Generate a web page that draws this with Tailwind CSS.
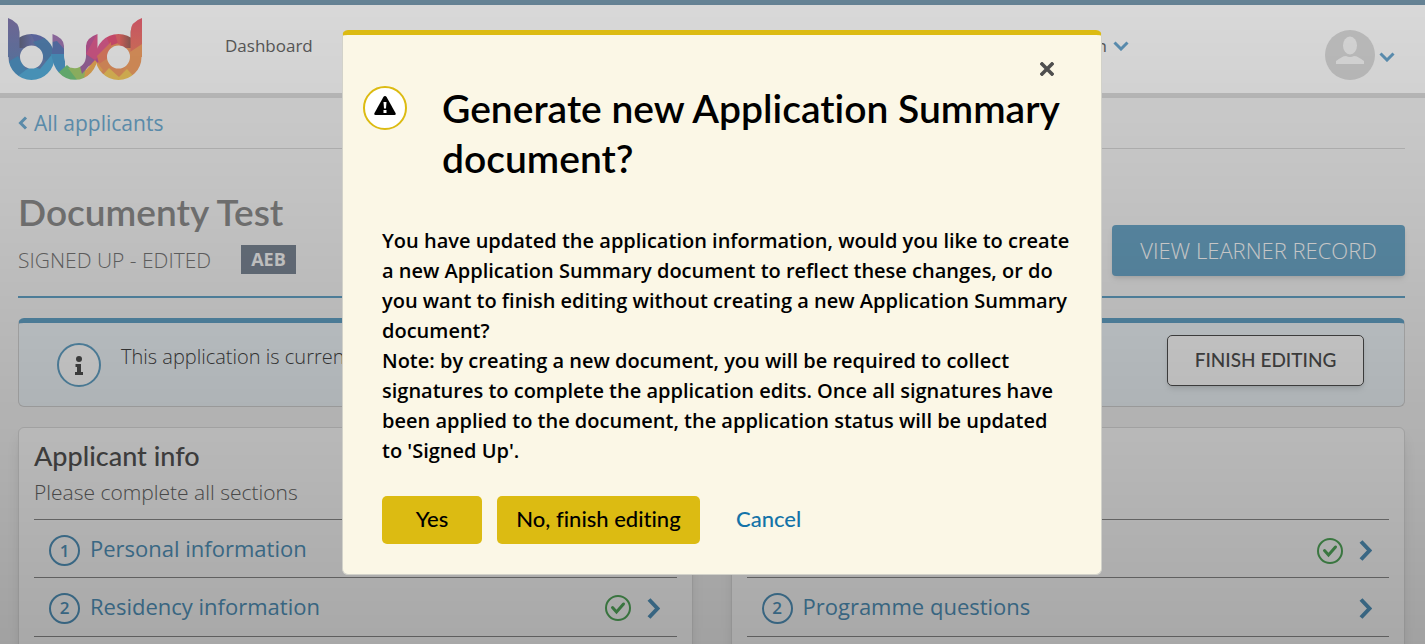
<!DOCTYPE html>
<html lang="en">
<head>
    <meta charset="UTF-8">
    <meta name="viewport" content="width=device-width, initial-scale=1.0">
    <title>Documenty Test</title>
    <script src="https://cdn.jsdelivr.net/npm/@tailwindcss/browser@4"></script>
</head>
<body class="h-screen overflow-hidden bg-[#f5f5f5] font-['Open_Sans',sans-serif] text-[#666] [font-variant-ligatures:none]">
    <svg class="hidden">
        <symbol id="check" viewBox="0 0 26 26" fill="none" stroke="currentColor">
            <circle cx="13" cy="13" r="12" stroke-width="2"/>
            <path d="M7.5 12.500l4 4.500 7-8" stroke-width="3" stroke-linecap="round"/>
        </symbol>
        <symbol id="chevron-right" viewBox="0 0 13 21">
            <path d="M2 1.500l8.500 9L2 19.500" fill="none" stroke="currentColor" stroke-width="4"/>
        </symbol>
        <symbol id="chevron-down" viewBox="0 0 16 10">
            <path d="M1.500 1.500L8 8l6.500-6.500" fill="none" stroke="currentColor" stroke-width="3"/>
        </symbol>
    </svg>

    <!-- Header -->
    <header class="flex h-[98px] border-t-5 border-b-5 border-t-[#7799ae] border-b-[#dbdbdb] bg-white pr-[30px] pl-2">
        <a href="#" aria-label="bud" class="mt-[13px]">
            <svg width="134" height="62" viewBox="0 0 134 62">
                <defs>
                    <mask id="letters">
                        <g fill="none" stroke="#fff" stroke-width="11.500">
                            <circle cx="23.500" cy="39" r="17.250"/>
                            <circle cx="110.500" cy="39" r="17.250"/>
                            <path d="M50.250 38a16.750 18 0 0 0 33.500 0"/>
                        </g>
                        <path fill="#fff" d="M0 0Q11.500 4 11.500 14V39H0zM134 0Q122.500 4 122.500 14V39H134zM44.500 16Q56 20 56 28V40H44.500zM89.500 16Q78 20 78 28V40H89.500z"/>
                    </mask>
                    <linearGradient id="purple" x1="0" y1="0" x2="0" y2="1"><stop offset="0" stop-color="#8378ae"/><stop offset="1" stop-color="#5f8cbc"/></linearGradient>
                    <linearGradient id="red" x1="0" y1="0" x2="0" y2="1"><stop offset="0" stop-color="#ed6376"/><stop offset="1" stop-color="#f07f68"/></linearGradient>
                    <linearGradient id="shadeB"><stop offset="0" stop-color="#666a86"/><stop offset="1" stop-color="#747db9"/></linearGradient>
                    <linearGradient id="shadeD"><stop offset="0" stop-color="#ee6c66"/><stop offset="1" stop-color="#98655e"/></linearGradient>
                </defs>
                <g mask="url(#letters)">
                    <path fill="url(#purple)" d="M0 0h46v62H0z"/>
                    <path fill="#f19c66" d="M84 12h50v50H84z"/>
                    <path fill="url(#shadeB)" d="M11.500 12H24v18H11.500z"/>
                    <path fill="#6a77b8" d="M21 12h24v16L30 30z"/>
                    <path fill="#5788ba" d="M25 24l9-3 11-5v40L30 30z"/>
                    <path fill="#5297c8" d="M0 44l10-6 14 24H0z"/>
                    <path fill="#56aedb" d="M10 58l13-10 9 3 14-17 4 28H10z"/>
                    <path fill="#a379b5" d="M44 12h14v20l-14 2z"/>
                    <path fill="#607cba" d="M44 24l5-1 8 9v9l-13-3z"/>
                    <path fill="#52a0d2" d="M43 36h14v14L50 62z"/>
                    <path fill="#76c982" d="M50 55l9-8 17 15H54z"/>
                    <path fill="#a6d072" d="M60 50l14-2 9 9-13 6z"/>
                    <path fill="#c65c9e" d="M76 12h15v32L76 50z"/>
                    <path fill="#a66da8" d="M78 36l8 6-12 14-2-8z"/>
                    <path fill="#e35f93" d="M78 36l13-24h17l-4 13-17 17z"/>
                    <path fill="#e8557b" d="M96 12h14v13l-8 3z"/>
                    <path fill="#ef6d72" d="M106 12h16v18l-12-4z"/>
                    <path fill="url(#shadeD)" d="M112 12h11v18h-11z"/>
                    <path fill="#f5b45c" d="M77 53l10-11 8 10-9 10H76z"/>
                    <path fill="#f1866a" d="M89 38l14-14v14l-12 8z"/>
                    <path fill="url(#red)" d="M122.500 0H134v34h-11.500z"/>
                    <path fill="#f3a266" d="M122 34l12-8v30l-22 6z"/>
                    <path fill="#f6cb60" d="M90 62l11-12 10 9 8-8 10 11z"/>
                </g>
            </svg>
        </a>
        <nav class="flex flex-1 items-start pt-[30px] pl-[83px] text-[17px] leading-[22px]">
            <a href="#">Dashboard</a>
            <a href="#" class="ml-auto flex items-center gap-1.5">Admin
                <svg class="h-2.5 w-4 text-[#6aa6ce]"><use href="#chevron-down"/></svg>
            </a>
        </nav>
        <button type="button" aria-label="Account" class="ml-[196px] flex items-center gap-1 pt-3">
            <svg width="50" height="50" viewBox="0 0 50 50">
                <circle cx="25" cy="25" r="25" fill="#dbdbdb"/>
                <ellipse cx="25" cy="15.500" rx="7" ry="9" fill="#fafafa"/>
                <path d="M11 34v-3c4-3 7-5 10-5q4 2 8 0c3 0 6 2 10 5v3z" fill="#fafafa"/>
            </svg>
            <svg class="mt-1 h-2.5 w-4 text-[#6aa6ce]"><use href="#chevron-down"/></svg>
        </button>
    </header>

    <main class="pr-5 pl-[18px]">
        <div class="flex h-[51px] items-center border-b border-[#d5d5d5]">
            <a href="#" class="flex items-center gap-1.5 text-[21px] leading-7 text-[#6fabd0]">
                <svg width="10" height="14" viewBox="0 0 10 14"><path d="M8 1.500L2.500 7 8 12.500" fill="none" stroke="currentColor" stroke-width="3"/></svg>
                All applicants
            </a>
        </div>

        <div class="flex items-end justify-between border-b-2 border-[#64a3c7] pt-[38px] pb-5">
            <div class="pb-0.5">
                <h1 class="font-[Lato] text-[37px] leading-[50px] font-semibold text-[#8b8b8b]">Documenty Test</h1>
                <div class="mt-2 flex items-center gap-[30px]">
                    <span class="text-[21px] leading-7 font-light text-[#777]">SIGNED UP - EDITED</span>
                    <span class="bg-[#7b8695] px-2.5 text-lg leading-[29px] font-bold text-[#f5f5f5]">AEB</span>
                </div>
            </div>
            <button type="button" class="h-[51px] w-[293px] rounded bg-[#6ca6c7] text-[22px] font-light text-white shadow-md">VIEW LEARNER RECORD</button>
        </div>

        <!-- Edit notice -->
        <section class="mt-5 flex h-[89px] items-start rounded-md border border-t-5 border-[#d2d2d2] border-t-[#64a3c7] bg-[#eff6fa] pr-10 pl-[38px]">
            <span class="mt-5 flex size-11 items-center justify-center rounded-full border-2 border-[#64a3c7] bg-white">
                <svg width="8" height="19" viewBox="0 0 8 19" fill="#505050"><circle cx="4" cy="3" r="3"/><path d="M.5 8h5.500v8H8v3H0v-3h2v-5H.5z"/></svg>
            </span>
            <p class="mt-5 ml-5 text-xl leading-7 font-light text-[#444]">This application is currently being edited</p>
            <button type="button" class="mt-3 ml-auto h-[51px] w-[197px] rounded-[5px] border border-[#505050] bg-white font-[Lato] text-[19px] font-medium text-[#505050] shadow-md">FINISH EDITING</button>
        </section>

        <div class="mt-5 grid grid-cols-2 gap-[38px]">
            <section class="h-[260px] rounded-md border border-[#dedede] bg-white px-[15px] pt-3 shadow-lg">
                <h2 class="font-[Lato] text-[27px] leading-8 font-medium text-[#555]">Applicant info</h2>
                <p class="mt-1 text-[21px] leading-8 font-light">Please complete all sections</p>
                <ul class="mt-[11px] text-[22px] text-[#5497c0]">
                    <li class="border-t border-[#8e8e8e]">
                        <a href="#" class="flex h-[57px] items-center px-[15px]">
                            <span class="mt-1 mr-2.5 flex size-[31px] items-center justify-center rounded-full border-2 text-[17px] font-semibold">1</span>
                            Personal information
                        </a>
                    </li>
                    <li class="border-y border-[#8e8e8e]">
                        <a href="#" class="flex h-[58px] items-center pr-[17px] pb-0.5 pl-[15px]">
                            <span class="mt-1 mr-2.5 flex size-[31px] items-center justify-center rounded-full border-2 text-[17px] font-semibold">2</span>
                            Residency information
                            <svg class="mt-1 mr-4 ml-auto size-[26px] text-[#55ad5e]"><use href="#check"/></svg>
                            <svg class="mt-1 h-[21px] w-[13px]"><use href="#chevron-right"/></svg>
                        </a>
                    </li>
                </ul>
            </section>
            <section class="h-[260px] rounded-md border border-[#dedede] bg-white px-[15px] pt-[91px] shadow-lg">
                <ul class="text-[22px] text-[#5497c0]">
                    <li class="border-t border-[#8e8e8e]">
                        <a href="#" aria-label="Section 1" class="flex h-[57px] items-center pr-[17px] pl-[15px]">
                            <svg class="mt-1 mr-4 ml-auto size-[26px] text-[#55ad5e]"><use href="#check"/></svg>
                            <svg class="mt-1 h-[21px] w-[13px]"><use href="#chevron-right"/></svg>
                        </a>
                    </li>
                    <li class="border-y border-[#8e8e8e]">
                        <a href="#" class="flex h-[58px] items-center pr-[17px] pb-0.5 pl-[15px]">
                            <span class="mt-1 mr-2.5 flex size-[31px] items-center justify-center rounded-full border-2 text-[17px] font-semibold">2</span>
                            Programme questions
                            <svg class="mt-1 ml-auto h-[21px] w-[13px]"><use href="#chevron-right"/></svg>
                        </a>
                    </li>
                </ul>
            </section>
        </div>
    </main>

    <!-- Modal -->
    <div class="fixed inset-0 flex items-start justify-center bg-linear-to-b from-black/15 to-black/34 pt-[30px] pl-[19px]">
        <div role="dialog" aria-modal="true" aria-labelledby="dialog-title" class="relative w-[760px] rounded-md border border-t-5 border-[#d2d2ca] border-t-[#dcbb12] bg-[#fbf7e6] pr-7 pb-[30px] pl-[39px] text-black">
            <button type="button" aria-label="Close" class="absolute top-[27px] right-[47px]">
                <svg width="14" height="14" viewBox="0 0 14 14"><path d="M2 2l10 10M12 2L2 12" stroke="#4f4f4f" stroke-width="3.600" stroke-linecap="square"/></svg>
            </button>
            <span class="absolute top-[51px] left-5 flex size-11 items-center justify-center rounded-full border-2 border-[#dcbb12] bg-white">
                <svg class="-mt-1" width="22" height="20" viewBox="0 0 22 20">
                    <path d="M11 0q1 0 1.600 1L21.500 17q.8 2-1 2h-19q-1.800 0-1-2L9.400 1Q10 0 11 0z"/>
                    <path d="M9.500 6h3l-.5 6.500h-2zM9.500 14h3v3h-3z" fill="#fff"/>
                </svg>
            </span>
            <h2 id="dialog-title" class="pt-12 pl-[60px] font-[Lato] text-[39px] leading-[50px] font-semibold">Generate new Application Summary document?</h2>
            <p class="mt-[43px] text-xl leading-[30px] font-semibold">You have updated the application information, would you like to create<br>a new Application Summary document to reflect these changes, or do<br>you want to finish editing without creating a new Application Summary<br>document?<br>Note: by creating a new document, you will be required to collect<br>signatures to complete the application edits. Once all signatures have<br>been applied to the document, the application status will be updated<br>to 'Signed Up'.</p>
            <div class="mt-[30px] flex font-[Lato] text-[22px] font-medium">
                <button type="button" class="h-12 w-[100px] rounded-[5px] bg-[#dcbb12] pb-1">Yes</button>
                <button type="button" class="ml-[15px] h-12 w-[203px] rounded-[5px] bg-[#dcbb12] pb-1">No, finish editing</button>
                <button type="button" class="ml-9 h-12 pb-1 text-[#1473a8]">Cancel</button>
            </div>
        </div>
    </div>
</body>
</html>
